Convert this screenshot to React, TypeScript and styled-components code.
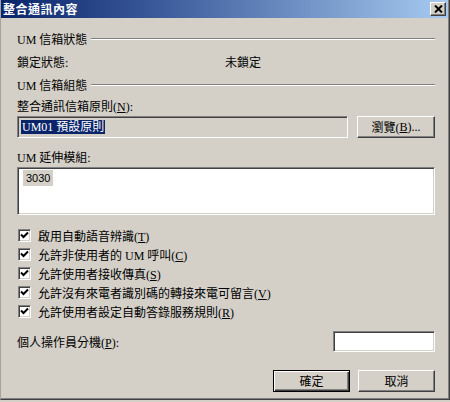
import React from 'react';
import styled, { createGlobalStyle } from 'styled-components';

const Global = createGlobalStyle`
  html, body { margin: 0; padding: 0; background: #d4d0c8; }
  body {
    font-family: "Liberation Serif", "Noto Sans CJK TC", serif;
    font-size: 12px;
    color: #000;
  }
  * { box-sizing: border-box; }
`;

const Window = styled.div`
  width: 450px;
  height: 400px;
  background: #d4d0c8;
  display: flex;
  flex-direction: column;
  border-left: 1px solid #a8a49c;
  border-right: 1px solid #404040;
  border-bottom: 1px solid #404040;
  box-shadow: inset -1px -1px #808080;
`;

const TitleBar = styled.div`
  height: 18px;
  margin-right: 1px;
  display: flex;
  align-items: center;
  justify-content: space-between;
  padding: 0 2px 0 2px;
  background: linear-gradient(to right, #0a246a 0%, #3a5a9a 35%, #a6caf0 100%);
`;

const TitleText = styled.span`
  color: #fff;
  font-weight: bold;
  font-family: "Noto Sans CJK TC", sans-serif;
  font-size: 12px;
  line-height: 18px;
  letter-spacing: 0.5px;
`;

const CloseButton = styled.div`
  width: 16px;
  height: 14px;
  background: #d4d0c8;
  border: 1px solid;
  border-color: #fff #404040 #404040 #fff;
  box-shadow: inset -1px -1px #808080;
  display: flex;
  align-items: center;
  justify-content: center;
`;

const Body = styled.div`
  flex: 1;
  display: flex;
  flex-direction: column;
  padding: 0 14px 0 16px;
`;

const SectionHeader = styled.div<{ $mt: number }>`
  display: flex;
  align-items: center;
  height: 16px;
  margin-top: ${(p) => p.$mt}px;
  white-space: nowrap;
`;

const EtchedLine = styled.div`
  flex: 1;
  height: 2px;
  margin-left: 4px;
  border-top: 1px solid #808080;
  border-bottom: 1px solid #fff;
`;

const StatusRow = styled.div<{ $mt: number }>`
  display: grid;
  grid-template-columns: 208px auto;
  height: 16px;
  align-items: center;
  margin-top: ${(p) => p.$mt}px;
`;

const Label = styled.div<{ $mt: number }>`
  height: 16px;
  line-height: 16px;
  margin-top: ${(p) => p.$mt}px;
  white-space: nowrap;
`;

const InlineRow = styled.div<{ $mt: number; $h: number }>`
  display: flex;
  align-items: center;
  gap: 9px;
  height: ${(p) => p.$h}px;
  margin-top: ${(p) => p.$mt}px;
`;

const Sunken = styled.div`
  border: 1px solid;
  border-color: #808080 #fff #fff #808080;
  box-shadow: inset 1px 1px #404040, inset -1px -1px #d4d0c8;
`;

const ReadonlyField = styled(Sunken)`
  flex: 1;
  height: 22px;
  background: #d4d0c8;
  padding: 3px 0 0 3px;
`;

const Selected = styled.span`
  display: inline-block;
  background: #0a246a;
  color: #fff;
  height: 14px;
  line-height: 14px;
  padding: 0 1px;
  white-space: nowrap;
`;

const TextField = styled(Sunken)<{ $w: number }>`
  width: ${(p) => p.$w}px;
  height: 21px;
  background: #fff;
  margin-left: auto;
`;

const ListBox = styled(Sunken)`
  height: 48px;
  margin-top: 1px;
  background: #fff;
  padding: 2px 0 0 5px;
`;

const ListItem = styled.div<{ $selected?: boolean }>`
  display: inline-block;
  font-family: "Liberation Sans", "Noto Sans CJK TC", sans-serif;
  font-size: 11px;
  height: 16px;
  line-height: 16px;
  padding: 0 3px;
  background: ${(p) => (p.$selected ? '#d4d0c8' : 'transparent')};
`;

const CheckList = styled.div`
  display: flex;
  flex-direction: column;
  margin-top: 11px;
`;

const CheckRow = styled.div`
  display: flex;
  align-items: center;
  height: 19px;
  gap: 7px;
  padding-left: 1px;
  white-space: nowrap;
`;

const Box = styled(Sunken)`
  width: 13px;
  height: 13px;
  background: #fff;
  display: flex;
  align-items: center;
  justify-content: center;
  flex-shrink: 0;
`;

const Btn = styled.div<{ $w: number; $default?: boolean }>`
  width: ${(p) => p.$w}px;
  height: 22px;
  background: #d4d0c8;
  display: flex;
  align-items: center;
  justify-content: center;
  white-space: nowrap;
  border: 1px solid;
  border-color: ${(p) => (p.$default ? '#000' : '#fff #404040 #404040 #fff')};
  box-shadow: ${(p) =>
    p.$default
      ? 'inset 1px 1px #fff, inset -1px -1px #404040, inset -2px -2px #808080'
      : 'inset -1px -1px #808080'};
`;

const ButtonRow = styled.div`
  display: flex;
  justify-content: flex-end;
  gap: 8px;
  margin-top: 18px;
`;

const Check = () => (
  <svg width="9" height="9" viewBox="0 0 9 9">
    <polyline points="1,3.5 3.5,6 8,1.5" fill="none" stroke="#000" strokeWidth="2" />
  </svg>
);

const XIcon = () => (
  <svg width="9" height="8" viewBox="0 0 9 8">
    <path d="M1 0.5 L8 7.5 M8 0.5 L1 7.5" stroke="#000" strokeWidth="2" />
  </svg>
);

const checks: [string, string, string][] = [
  ['啟用自動語音辨識(', 'T', ')'],
  ['允許非使用者的 UM 呼叫(', 'C', ')'],
  ['允許使用者接收傳真(', 'S', ')'],
  ['允許沒有來電者識別碼的轉接來電可留言(', 'V', ')'],
  ['允許使用者設定自動答錄服務規則(', 'R', ')'],
];

export default function App() {
  return (
    <>
      <Global />
      <Window>
        <TitleBar>
          <TitleText>整合通訊內容</TitleText>
          <CloseButton>
            <XIcon />
          </CloseButton>
        </TitleBar>
        <Body>
          <SectionHeader $mt={13}>
            UM 信箱狀態
            <EtchedLine />
          </SectionHeader>
          <StatusRow $mt={6}>
            <span>鎖定狀態:</span>
            <span>未鎖定</span>
          </StatusRow>
          <SectionHeader $mt={8}>
            UM 信箱組態
            <EtchedLine />
          </SectionHeader>
          <Label $mt={6}>
            整合通訊信箱原則(<u>N</u>):
          </Label>
          <InlineRow $mt={1} $h={22}>
            <ReadonlyField>
              <Selected>UM01 預設原則</Selected>
            </ReadonlyField>
            <Btn $w={78}>
              瀏覽(<u>B</u>)...
            </Btn>
          </InlineRow>
          <Label $mt={12}>UM 延伸模組:</Label>
          <ListBox>
            <ListItem $selected>3030</ListItem>
          </ListBox>
          <CheckList>
            {checks.map(([a, k, b]) => (
              <CheckRow key={k}>
                <Box>
                  <Check />
                </Box>
                <span>
                  {a}
                  <u>{k}</u>
                  {b}
                </span>
              </CheckRow>
            ))}
          </CheckList>
          <InlineRow $mt={10} $h={21}>
            <span>
              個人操作員分機(<u>P</u>):
            </span>
            <TextField $w={102} />
          </InlineRow>
          <ButtonRow>
            <Btn $w={77} $default>
              確定
            </Btn>
            <Btn $w={77}>取消</Btn>
          </ButtonRow>
        </Body>
      </Window>
    </>
  );
}
